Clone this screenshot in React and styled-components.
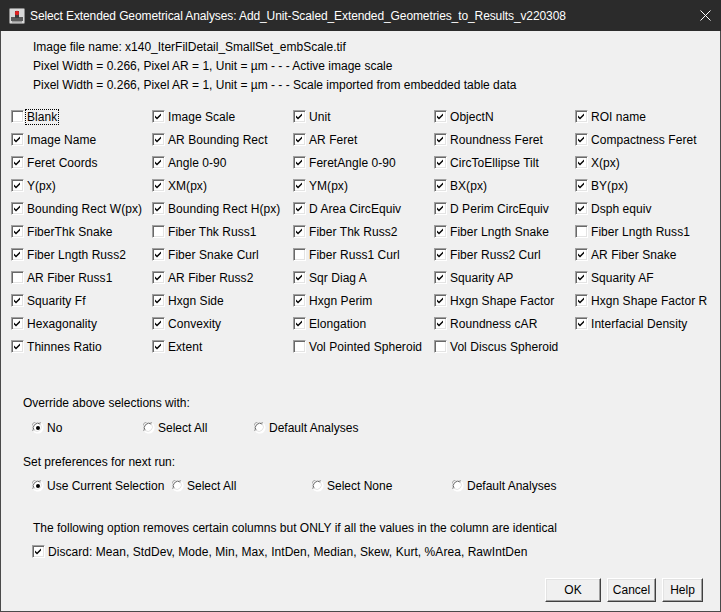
import React, { useState } from 'react';
import styled, { createGlobalStyle } from 'styled-components';

const GlobalStyle = createGlobalStyle`
  html, body {
    margin: 0;
    padding: 0;
    background: #f0f0f0;
  }
`;

const ANALYSES = [
  ['Blank', false], ['Image Scale', true], ['Unit', true], ['ObjectN', true], ['ROI name', true],
  ['Image Name', true], ['AR Bounding Rect', true], ['AR Feret', true], ['Roundness Feret', true], ['Compactness Feret', true],
  ['Feret Coords', true], ['Angle 0-90', true], ['FeretAngle 0-90', true], ['CircToEllipse Tilt', true], ['X(px)', true],
  ['Y(px)', true], ['XM(px)', true], ['YM(px)', true], ['BX(px)', true], ['BY(px)', true],
  ['Bounding Rect W(px)', true], ['Bounding Rect H(px)', true], ['D Area CircEquiv', true], ['D Perim CircEquiv', true], ['Dsph equiv', true],
  ['FiberThk Snake', true], ['Fiber Thk Russ1', false], ['Fiber Thk Russ2', true], ['Fiber Lngth Snake', true], ['Fiber Lngth Russ1', false],
  ['Fiber Lngth Russ2', true], ['Fiber Snake Curl', true], ['Fiber Russ1 Curl', false], ['Fiber Russ2 Curl', true], ['AR Fiber Snake', true],
  ['AR Fiber Russ1', false], ['AR Fiber Russ2', true], ['Sqr Diag A', true], ['Squarity AP', true], ['Squarity AF', true],
  ['Squarity Ff', true], ['Hxgn Side', true], ['Hxgn Perim', true], ['Hxgn Shape Factor', true], ['Hxgn Shape Factor R', true],
  ['Hexagonality', true], ['Convexity', true], ['Elongation', true], ['Roundness cAR', true], ['Interfacial Density', true],
  ['Thinnes Ratio', true], ['Extent', true], ['Vol Pointed Spheroid', false], ['Vol Discus Spheroid', false],
];

const Window = styled.div`
  width: 721px;
  height: 612px;
  box-sizing: border-box;
  border: 1px solid #4a4a4a;
  border-top: none;
  background: #f0f0f0;
  display: flex;
  flex-direction: column;
  font-family: "Liberation Sans", Arial, sans-serif;
  font-size: 12px;
  color: #000;
`;

const TitleBar = styled.div`
  height: 31px;
  margin: 0 -1px;
  background: #2b2b2b;
  color: #fff;
  display: flex;
  align-items: center;
  padding: 0 0 0 9px;
  font-family: "Liberation Sans", Arial, sans-serif;
  font-size: 12px;
`;

const TitleText = styled.span`
  flex: 1;
  margin-left: 5px;
  letter-spacing: -0.1px;
`;

const CloseBox = styled.div`
  width: 46px;
  height: 31px;
  display: flex;
  align-items: center;
  justify-content: center;
  margin-right: -7px;
`;

const Body = styled.div`
  padding-top: 7px;
  display: flex;
  flex-direction: column;
  flex: 1;
`;

const InfoBlock = styled.div`
  padding-left: 32px;
  line-height: 19px;
`;

const Grid = styled.div`
  margin-top: 10px;
  padding-left: 10px;
  display: grid;
  grid-template-columns: repeat(5, 141px);
  grid-auto-rows: 23px;
`;

const Item = styled.label`
  display: flex;
  align-items: center;
  gap: 2px;
  white-space: nowrap;
  cursor: default;
`;

const Label = styled.span`
  padding: 0 1px;
  line-height: 14px;
  letter-spacing: 0.05px;
  outline: ${p => (p.$focus ? '1px dotted #000' : 'none')};
`;

const Box = styled.span`
  width: 13px;
  height: 13px;
  box-sizing: border-box;
  flex: none;
  background: #fff;
  border: 1px solid;
  border-color: #a0a0a0 #ffffff #ffffff #a0a0a0;
  box-shadow: inset 1px 1px 0 #696969, inset -1px -1px 0 #e3e3e3;
  display: flex;
`;

const Heading = styled.div`
  padding-left: ${p => p.$indent}px;
  margin-top: ${p => p.$top}px;
  line-height: 19px;
`;

const RadioRow = styled.div`
  display: grid;
  grid-template-columns: repeat(${p => p.$count}, ${p => p.$cell}px);
  padding-left: 31px;
  margin-top: ${p => p.$top}px;
  height: 23px;
`;

const RadioItem = styled.label`
  display: flex;
  align-items: center;
  gap: 3px;
  white-space: nowrap;
`;

const SingleRow = styled.div`
  display: flex;
  padding-left: 31px;
  margin-top: 2px;
  height: 23px;
`;

const Footer = styled.div`
  display: flex;
  justify-content: flex-end;
  gap: 6px;
  padding-right: 17px;
  margin-top: 15px;
`;

const Button = styled.button`
  width: ${p => p.$w}px;
  height: 24px;
  box-sizing: border-box;
  background: #f0f0f0;
  border: 1px solid;
  border-color: #ffffff #404040 #404040 #ffffff;
  box-shadow: inset -1px -1px 0 #a0a0a0, inset 1px 1px 0 #e3e3e3;
  font-family: "Liberation Sans", Arial, sans-serif;
  font-size: 12px;
  color: #000;
  padding: 0;
`;

const AppIcon = () => (
  <svg width="16" height="16" viewBox="0 0 16 16">
    <rect x="0.5" y="0.5" width="15" height="15" rx="1" fill="#d8d8d8" stroke="#8a8a8a" />
    <rect x="2" y="9" width="12" height="4" fill="#5a5a5a" />
    <rect x="6" y="3" width="4" height="7" fill="#3c3c3c" />
    <rect x="3" y="13" width="10" height="1.5" fill="#9a9a9a" />
    <circle cx="8" cy="5" r="2.2" fill="#e02020" />
  </svg>
);

const CloseIcon = () => (
  <svg width="11" height="11" viewBox="0 0 11 11">
    <path d="M0.5 0.5 L10.5 10.5 M10.5 0.5 L0.5 10.5" stroke="#fff" strokeWidth="1" />
  </svg>
);

const Check = ({ checked, onChange, label, focus }) => (
  <Item onClick={onChange}>
    <Box>
      {checked && (
        <svg width="11" height="11" viewBox="0 0 11 11">
          <path d="M2 4.5 L4 6.5 L8 2.5 L8 4.5 L4 8.5 L2 6.5 Z" fill="#000" />
        </svg>
      )}
    </Box>
    <Label $focus={focus}>{label}</Label>
  </Item>
);

const RadioMark = ({ on }) => (
  <svg width="12" height="12" viewBox="0 0 12 12">
    <circle cx="6" cy="6" r="5.5" fill="#fff" />
    <path d="M1.2 9.2 A5.5 5.5 0 0 1 9.2 1.2" stroke="#a0a0a0" strokeWidth="1" fill="none" />
    <path d="M2.2 8.5 A4.5 4.5 0 0 1 8.5 2.2" stroke="#696969" strokeWidth="1" fill="none" />
    <path d="M9.2 1.2 A5.5 5.5 0 0 1 1.2 9.2" stroke="#fff" strokeWidth="1" fill="none" />
    <path d="M8.5 2.2 A4.5 4.5 0 0 1 2.2 8.5" stroke="#e3e3e3" strokeWidth="1" fill="none" />
    {on && <circle cx="6" cy="6" r="2" fill="#000" />}
  </svg>
);

const RadioGroup = ({ options, value, onChange, cell, top }) => (
  <RadioRow $count={options.length} $cell={cell} $top={top}>
    {options.map(opt => (
      <RadioItem key={opt} onClick={() => onChange(opt)}>
        <RadioMark on={value === opt} />
        <span>{opt}</span>
      </RadioItem>
    ))}
  </RadioRow>
);

export default function App() {
  const [checks, setChecks] = useState(ANALYSES.map(a => a[1]));
  const [override, setOverride] = useState('No');
  const [prefs, setPrefs] = useState('Use Current Selection');
  const [discard, setDiscard] = useState(true);

  const toggle = i => setChecks(c => c.map((v, j) => (j === i ? !v : v)));

  return (
    <>
      <GlobalStyle />
      <Window>
        <TitleBar>
          <AppIcon />
          <TitleText>Select Extended Geometrical Analyses: Add_Unit-Scaled_Extended_Geometries_to_Results_v220308</TitleText>
          <CloseBox><CloseIcon /></CloseBox>
        </TitleBar>
        <Body>
          <InfoBlock>
            <div>Image file name: x140_IterFilDetail_SmallSet_embScale.tif</div>
            <div>Pixel Width = 0.266, Pixel AR = 1, Unit = µm - - - Active image scale</div>
            <div>Pixel Width = 0.266, Pixel AR = 1, Unit = µm - - - Scale imported from embedded table data</div>
          </InfoBlock>
          <Grid>
            {ANALYSES.map(([name], i) => (
              <Check key={name} label={name} checked={checks[i]} focus={i === 0} onChange={() => toggle(i)} />
            ))}
          </Grid>
          <Heading $indent={22} $top={36}>Override above selections with:</Heading>
          <RadioGroup
            options={['No', 'Select All', 'Default Analyses']}
            value={override}
            onChange={setOverride}
            cell={111}
            top={3}
          />
          <Heading $indent={22} $top={14}>Set preferences for next run:</Heading>
          <RadioGroup
            options={['Use Current Selection', 'Select All', 'Select None', 'Default Analyses']}
            value={prefs}
            onChange={setPrefs}
            cell={140}
            top={2}
          />
          <Heading $indent={32} $top={22}>
            The following option removes certain columns but ONLY if all the values in the column are identical
          </Heading>
          <SingleRow>
            <Check
              label="Discard: Mean, StdDev, Mode, Min, Max, IntDen, Median, Skew, Kurt, %Area, RawIntDen"
              checked={discard}
              onChange={() => setDiscard(d => !d)}
            />
          </SingleRow>
          <Footer>
            <Button $w={56}>OK</Button>
            <Button $w={49}>Cancel</Button>
            <Button $w={41}>Help</Button>
          </Footer>
        </Body>
      </Window>
    </>
  );
}
